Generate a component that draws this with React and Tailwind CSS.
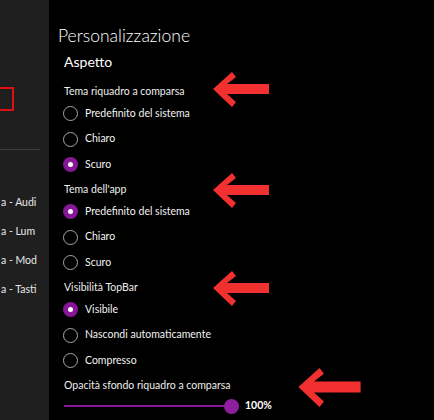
import React from 'react';

const font = { fontFamily: 'Lato, "Noto Sans", sans-serif' };

const Arrow = ({ className }) => (
    <svg viewBox="0 -18 56 36" className={`absolute ${className}`}>
        <polygon
            points="0,0 19,-17 23,-12 14,-5 56,-5 56,5 14,5 23,13 19,18"
            fill="#f2302f"
        />
    </svg>
);

const Radio = ({ label, checked }) => (
    <div className="flex items-center h-[25.5px]">
        {checked ? (
            <span className="w-[15px] h-[15px] rounded-full bg-[#881798] flex items-center justify-center">
                <span className="w-[5px] h-[5px] rounded-full bg-white" />
            </span>
        ) : (
            <span className="w-[15px] h-[15px] rounded-full border-[1.5px] border-[#a8a8a8]" />
        )}
        <span className="ml-[7px] text-[10.5px] text-[#f2f2f2]">{label}</span>
    </div>
);

const Group = ({ title, options, selected, first }) => (
    <div className={first ? 'mt-[10px]' : 'mt-[2.5px]'}>
        <div className="h-[19px] flex items-center pl-[1px] text-[10.5px] text-[#eeeeee]">{title}</div>
        {options.map((o, i) => (
            <Radio key={o} label={o} checked={i === selected} />
        ))}
    </div>
);

const App = () => {
    const sideItems = ['a - Audi', 'a - Lum', 'a - Mod', 'a - Tasti'];

    return (
        <div className="relative w-[434px] h-[420px] flex bg-black overflow-hidden" style={font}>
            {/* Barra laterale */}
            <div className="w-[49px] h-full bg-[#1f1f1f] shrink-0 flex flex-col">
                <div className="mt-[87px] w-[14px] h-[24px] border-2 border-l-0 border-[#e01010]" />
                <div className="mt-[38px] w-[40px] h-px bg-[#3d3d3d]" />
                <div className="mt-[38px] flex flex-col pl-[1px] text-[10.5px] text-[#e8e8e8] whitespace-nowrap">
                    {sideItems.map(s => (
                        <div key={s} className="h-[29px] flex items-center">{s}</div>
                    ))}
                </div>
            </div>

            {/* Contenuto */}
            <div className="flex-1 flex flex-col pl-[9px] pt-[24px]">
                <div className="h-[24px] flex items-center text-[17.5px] font-light text-white leading-none">Personalizzazione</div>
                <div className="mt-[2px] h-[22px] flex items-center pl-[6px] text-[14px] text-white">Aspetto</div>
                <div className="pl-[5px]">
                    <Group first title="Tema riquadro a comparsa" options={['Predefinito del sistema', 'Chiaro', 'Scuro']} selected={2} />
                    <Group title="Tema dell'app" options={['Predefinito del sistema', 'Chiaro', 'Scuro']} selected={0} />
                    <Group title="Visibilità TopBar" options={['Visibile', 'Nascondi automaticamente', 'Compresso']} selected={0} />
                    <div className="mt-[2.5px] h-[19px] flex items-center pl-[1px] text-[10.5px] text-[#eeeeee]">Opacità sfondo riquadro a comparsa</div>
                    <div className="h-[22px] flex items-center pl-[1px]">
                        <div className="w-[160px] h-[2px] bg-[#881798]" />
                        <div className="w-[15px] h-[15px] rounded-full bg-[#8e1f9f]" />
                        <span className="ml-[6px] text-[10.5px] font-bold text-white">100%</span>
                    </div>
                </div>
            </div>

            {/* Frecce */}
            <Arrow className="left-[213px] top-[71px] w-[56px] h-[36px]" />
            <Arrow className="left-[213px] top-[172px] w-[56px] h-[36px]" />
            <Arrow className="left-[213px] top-[270px] w-[56px] h-[36px]" />
            <Arrow className="left-[298px] top-[367px] w-[63px] h-[40px]" />
        </div>
    );
};

export default App;
